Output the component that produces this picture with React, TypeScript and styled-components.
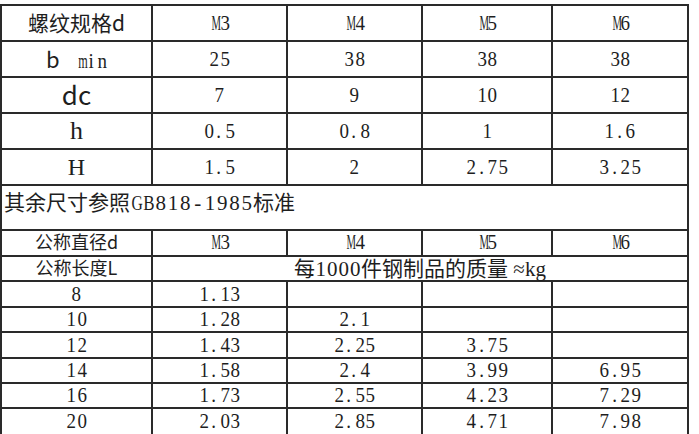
import styled, { createGlobalStyle } from 'styled-components';

const GlobalStyle = createGlobalStyle`
  body {
    margin: 0;
    background: #fff;
  }
`;

const Sheet = styled.table`
  border-collapse: collapse;
  table-layout: fixed;
  width: 687px;
  margin-top: 4px;
  color: #1e1e1e;
`;

const Row = styled.tr<{ $h: number }>`
  height: ${(p) => p.$h}px;
`;

const Cell = styled.td<{ $lift?: number }>`
  border: 2px solid #2a2a2a;
  padding: 0 0 ${(p) => p.$lift ?? 0}px;
  text-align: center;
  vertical-align: middle;
  font-family: "Liberation Serif", serif;
  font-size: 21px;
  line-height: 1;
  white-space: nowrap;
`;

const NoteCell = styled(Cell)`
  text-align: left;
  vertical-align: top;
  padding: 5px 0 0 2px;
`;

const Han = styled.span<{ $size?: number }>`
  display: inline-block;
  line-height: 1;
  font-family: "Noto Sans CJK SC", sans-serif;
  font-size: ${(p) => p.$size ?? 21}px;
`;

const Roman = styled.span<{ $size: number }>`
  font-family: "Liberation Serif", serif;
  font-size: ${(p) => p.$size}px;
`;

const Gap = styled.span`
  display: inline-block;
  width: 16px;
`;

// half-width glyph box, like the SimSun digits in the drawing
const Ch = styled.span<{ $w: number; $dot: boolean; $scale: number }>`
  display: inline-block;
  width: ${(p) => p.$w}px;
  text-align: ${(p) => (p.$dot ? 'left' : 'center')};
  padding-left: ${(p) => (p.$dot ? 2 : 0)}px;
  box-sizing: border-box;
  transform: ${(p) => (p.$scale < 1 ? `scaleX(${p.$scale})` : 'none')};
`;

// advance widths (em) of the wider Times glyphs
const advance: Record<string, number> = { M: 0.889, m: 0.778, G: 0.722, B: 0.667 };

const Mono = ({ text, w = 10.5 }: { text: string; w?: number }) => (
  <>
    {text.split('').map((c, i) => {
      const adv = (advance[c] ?? 0.5) * 21;
      const scale = Math.min(1, (w - 1) / adv);
      return (
        <Ch key={i} $w={w} $dot={c === '.'} $scale={scale}>
          {c}
        </Ch>
      );
    })}
  </>
);

const sizes = ['M3', 'M4', 'M5', 'M6'];

const upper: { label: React.ReactNode; values: string[] }[] = [
  {
    label: (
      <>
        <Han $size={22}>b</Han>
        <Gap />
        <Mono text="min" />
      </>
    ),
    values: ['25', '38', '38', '38'],
  },
  { label: <Han $size={26}>dc</Han>, values: ['7', '9', '10', '12'] },
  { label: <Roman $size={26}>h</Roman>, values: ['0.5', '0.8', '1', '1.6'] },
  { label: <Roman $size={24}>H</Roman>, values: ['1.5', '2', '2.75', '3.25'] },
];

const lower = [
  ['8', '1.13', '', '', ''],
  ['10', '1.28', '2.1', '', ''],
  ['12', '1.43', '2.25', '3.75', ''],
  ['14', '1.58', '2.4', '3.99', '6.95'],
  ['16', '1.73', '2.55', '4.23', '7.29'],
  ['20', '2.03', '2.85', '4.71', '7.98'],
];

const lowerHeights = [26, 25, 26, 25, 25, 27];

export default function App() {
  return (
    <>
      <GlobalStyle />
      <Sheet>
        <colgroup>
          <col style={{ width: 151 }} />
          <col style={{ width: 135 }} />
          <col style={{ width: 135 }} />
          <col style={{ width: 130 }} />
          <col style={{ width: 136 }} />
        </colgroup>
        <tbody>
          <Row $h={36}>
            <Cell>
              <Han $size={21}>螺纹规格d</Han>
            </Cell>
            {sizes.map((s) => (
              <Cell key={s}>
                <Mono text={s} />
              </Cell>
            ))}
          </Row>
          {upper.map((r, i) => (
            <Row $h={36} key={i}>
              <Cell>{r.label}</Cell>
              {r.values.map((v, j) => (
                <Cell key={j}>
                  <Mono text={v} />
                </Cell>
              ))}
            </Row>
          ))}
          <Row $h={45}>
            <NoteCell colSpan={5}>
              <Han>其余尺寸参照</Han>
              <Mono text="GB818-1985" w={12.3} />
              <Han>标准</Han>
            </NoteCell>
          </Row>
          <Row $h={26}>
            <Cell $lift={2}>
              <Han $size={18}>公称直径d</Han>
            </Cell>
            {sizes.map((s) => (
              <Cell key={s} $lift={2}>
                <Mono text={s} />
              </Cell>
            ))}
          </Row>
          <Row $h={25}>
            <Cell>
              <Han $size={18}>公称长度L</Han>
            </Cell>
            <Cell colSpan={4}>
              <Han>每</Han>
              <Mono text="1000" w={11.5} />
              <Han>件钢制品的质量</Han>
              <Roman $size={21}> ≈kg</Roman>
            </Cell>
          </Row>
          {lower.map((r, i) => (
            <Row $h={lowerHeights[i]} key={r[0]}>
              {r.map((v, j) => (
                <Cell key={j}>
                  <Mono text={v} />
                </Cell>
              ))}
            </Row>
          ))}
        </tbody>
      </Sheet>
    </>
  );
}
